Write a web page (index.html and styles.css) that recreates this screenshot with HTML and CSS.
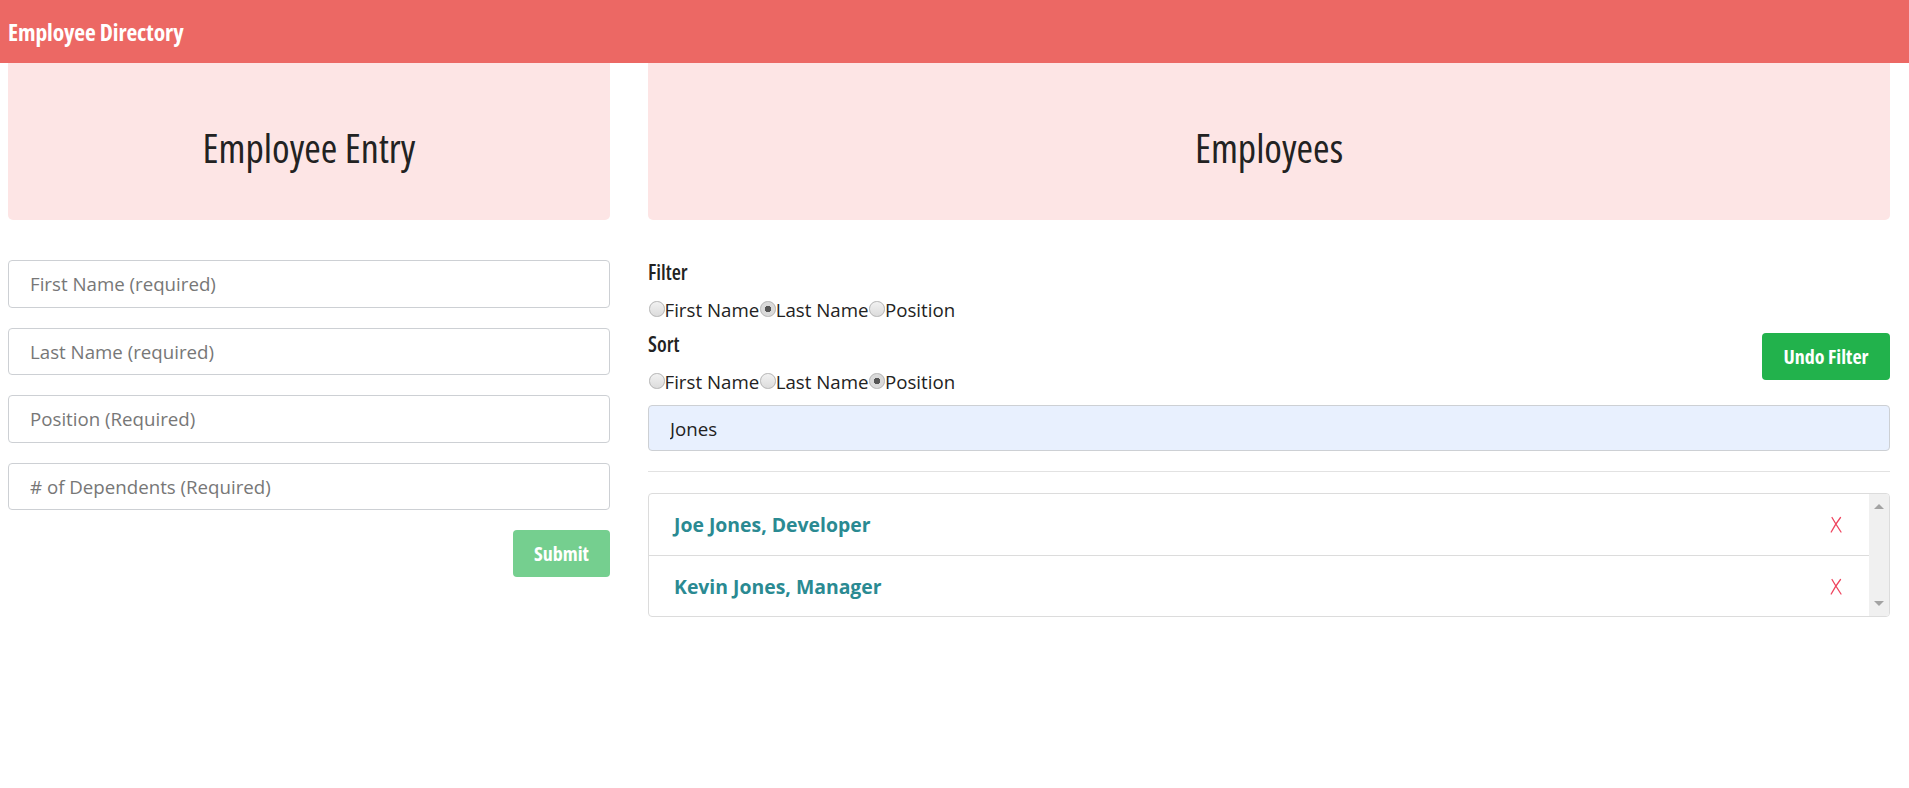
FILE: index.html
```html
<!DOCTYPE html>
<html lang="en">
<head>
<meta charset="utf-8">
<title>Employee Directory</title>
<link rel="stylesheet" href="styles.css">
</head>
<body>
<header class="navbar">
  <span class="brand">Employee Directory</span>
</header>
<main class="layout">
  <section class="col-entry">
    <div class="jumbo"><h1 class="jumbo-title">Employee Entry</h1></div>
    <form class="entry-form">
      <input class="field" type="text" placeholder="First Name (required)">
      <input class="field" type="text" placeholder="Last Name (required)">
      <input class="field" type="text" placeholder="Position (Required)">
      <input class="field" type="text" placeholder="# of Dependents (Required)">
      <div class="form-actions">
        <button class="btn btn-submit" type="button" disabled>Submit</button>
      </div>
    </form>
  </section>
  <section class="col-list">
    <div class="jumbo"><h1 class="jumbo-title">Employees</h1></div>
    <div class="group group-filter">
      <div class="group-label">Filter</div>
      <div class="radios">
        <label class="radio"><input type="radio" name="filter">First Name</label>
        <label class="radio"><input type="radio" name="filter" checked>Last Name</label>
        <label class="radio"><input type="radio" name="filter">Position</label>
      </div>
    </div>
    <div class="sort-row">
      <div class="group group-sort">
        <div class="group-label">Sort</div>
        <div class="radios">
          <label class="radio"><input type="radio" name="sort">First Name</label>
          <label class="radio"><input type="radio" name="sort">Last Name</label>
          <label class="radio"><input type="radio" name="sort" checked>Position</label>
        </div>
      </div>
      <button class="btn btn-undo" type="button">Undo Filter</button>
    </div>
    <input class="field field-filled" type="text" value="Jones">
    <hr class="divider">
    <div class="list">
      <ul class="list-rows">
        <li class="list-row">
          <span class="emp-name">Joe Jones, Developer</span>
          <svg class="remove" viewBox="0 0 12 17" aria-label="remove"><path d="M2 1.5 Q6 8.5 11 16 M10.5 1.5 Q5.5 8 1.2 16"/></svg>
        </li>
        <li class="list-row">
          <span class="emp-name">Kevin Jones, Manager</span>
          <svg class="remove" viewBox="0 0 12 17" aria-label="remove"><path d="M2 1.5 Q6 8.5 11 16 M10.5 1.5 Q5.5 8 1.2 16"/></svg>
        </li>
      </ul>
      <div class="scrollbar">
        <span class="arrow arrow-up"></span>
        <span class="arrow arrow-down"></span>
      </div>
    </div>
  </section>
</main>
</body>
</html>
```
FILE: styles.css
```css
* { box-sizing: border-box; }

body {
  margin: 0;
  font-family: "Open Sans", "Noto Sans", sans-serif;
  font-size: 18.7px;
  color: #222;
  background: #fff;
}

.navbar {
  height: 63px;
  background: #ec6864;
  display: flex;
  align-items: center;
  padding-left: 8px;
}

.brand,
.jumbo-title,
.btn,
.group-label {
  font-family: "Open Sans", "Noto Sans", sans-serif;
  font-stretch: 75%;
}

.brand {
  font-weight: 700;
  font-size: 23.5px;
  color: #fff;
  letter-spacing: -0.1px;
}

.layout {
  display: flex;
  gap: 38px;
  padding: 0 19px 0 8px;
}

.col-entry { width: 602px; flex: none; }
.col-list { flex: 1; min-width: 0; }

.jumbo {
  height: 157px;
  background: #fde5e5;
  border-radius: 0 0 5px 5px;
  display: flex;
  align-items: center;
  justify-content: center;
  padding-top: 12px;
}

.jumbo-title {
  margin: 0;
  font-weight: 500;
  font-size: 40px;
  color: #222;
}

.entry-form {
  margin-top: 40px;
  display: flex;
  flex-direction: column;
  gap: 20px;
}

.field {
  display: block;
  width: 100%;
  height: 47.5px;
  border: 1px solid #cdd0d4;
  border-radius: 4px;
  padding: 0 21px;
  font-family: inherit;
  font-size: 18.7px;
  color: #222;
  background: #fff;
  outline: none;
}

.field::placeholder { color: #777; }

.field-filled {
  margin-top: 9px;
  height: 46px;
  background: #e8f0fe;
}

.form-actions {
  display: flex;
  justify-content: flex-end;
}

.btn {
  font-weight: 700;
  font-size: 20px;
  color: #fff;
  border: none;
  border-radius: 4px;
  height: 47px;
  padding: 0;
  cursor: pointer;
}

.btn-submit {
  width: 97px;
  background: #75cf8f;
}

.btn-undo {
  width: 128px;
  background: #22b24c;
  margin-top: 2px;
}

.group-label {
  font-weight: 600;
  font-size: 21px;
  height: 27px;
  line-height: 27px;
}

.group-filter { margin-top: 39px; }

.radios {
  margin-top: 8px;
  height: 30px;
  display: flex;
  align-items: center;
}

.radio {
  display: inline-flex;
  align-items: center;
}

.radio input {
  appearance: none;
  -webkit-appearance: none;
  width: 15.5px;
  height: 15.5px;
  margin: 0 0 0 1px;
  border: 1px solid #b4b4b4;
  border-radius: 50%;
  background: linear-gradient(#f1f1f1, #dcdcdc);
}

.radio input:checked {
  background: radial-gradient(circle, #555 0 3px, #dadada 3.5px);
}

.sort-row {
  margin-top: 7px;
  display: flex;
  justify-content: space-between;
  align-items: flex-start;
}

.divider {
  margin: 20px 0 21px;
  border: 0;
  border-top: 1px solid #e2e2e2;
}

.list {
  display: flex;
  border: 1px solid #dcdcdc;
  border-radius: 4px;
  overflow: hidden;
}

.list-rows {
  flex: 1;
  margin: 0;
  padding: 0;
  list-style: none;
}

.list-row {
  height: 61px;
  display: flex;
  align-items: center;
  justify-content: space-between;
  padding: 0 27px 0 25px;
}

.list-row + .list-row { border-top: 1px solid #dcdcdc; }

.emp-name {
  font-weight: 700;
  font-size: 19.4px;
  color: #2a8a92;
}

.remove {
  width: 12px;
  height: 17px;
  fill: none;
  stroke: #ee4760;
  stroke-width: 1.3;
  stroke-linecap: round;
}

.scrollbar {
  width: 20px;
  flex: none;
  background: #f0f0f0;
  display: flex;
  flex-direction: column;
  justify-content: space-between;
  align-items: center;
  padding: 10px 0 10px;
}

.arrow {
  width: 0;
  height: 0;
  border-left: 5px solid transparent;
  border-right: 5px solid transparent;
}

.arrow-up { border-bottom: 5px solid #a3a3a3; }
.arrow-down { border-top: 5px solid #a3a3a3; }
```
